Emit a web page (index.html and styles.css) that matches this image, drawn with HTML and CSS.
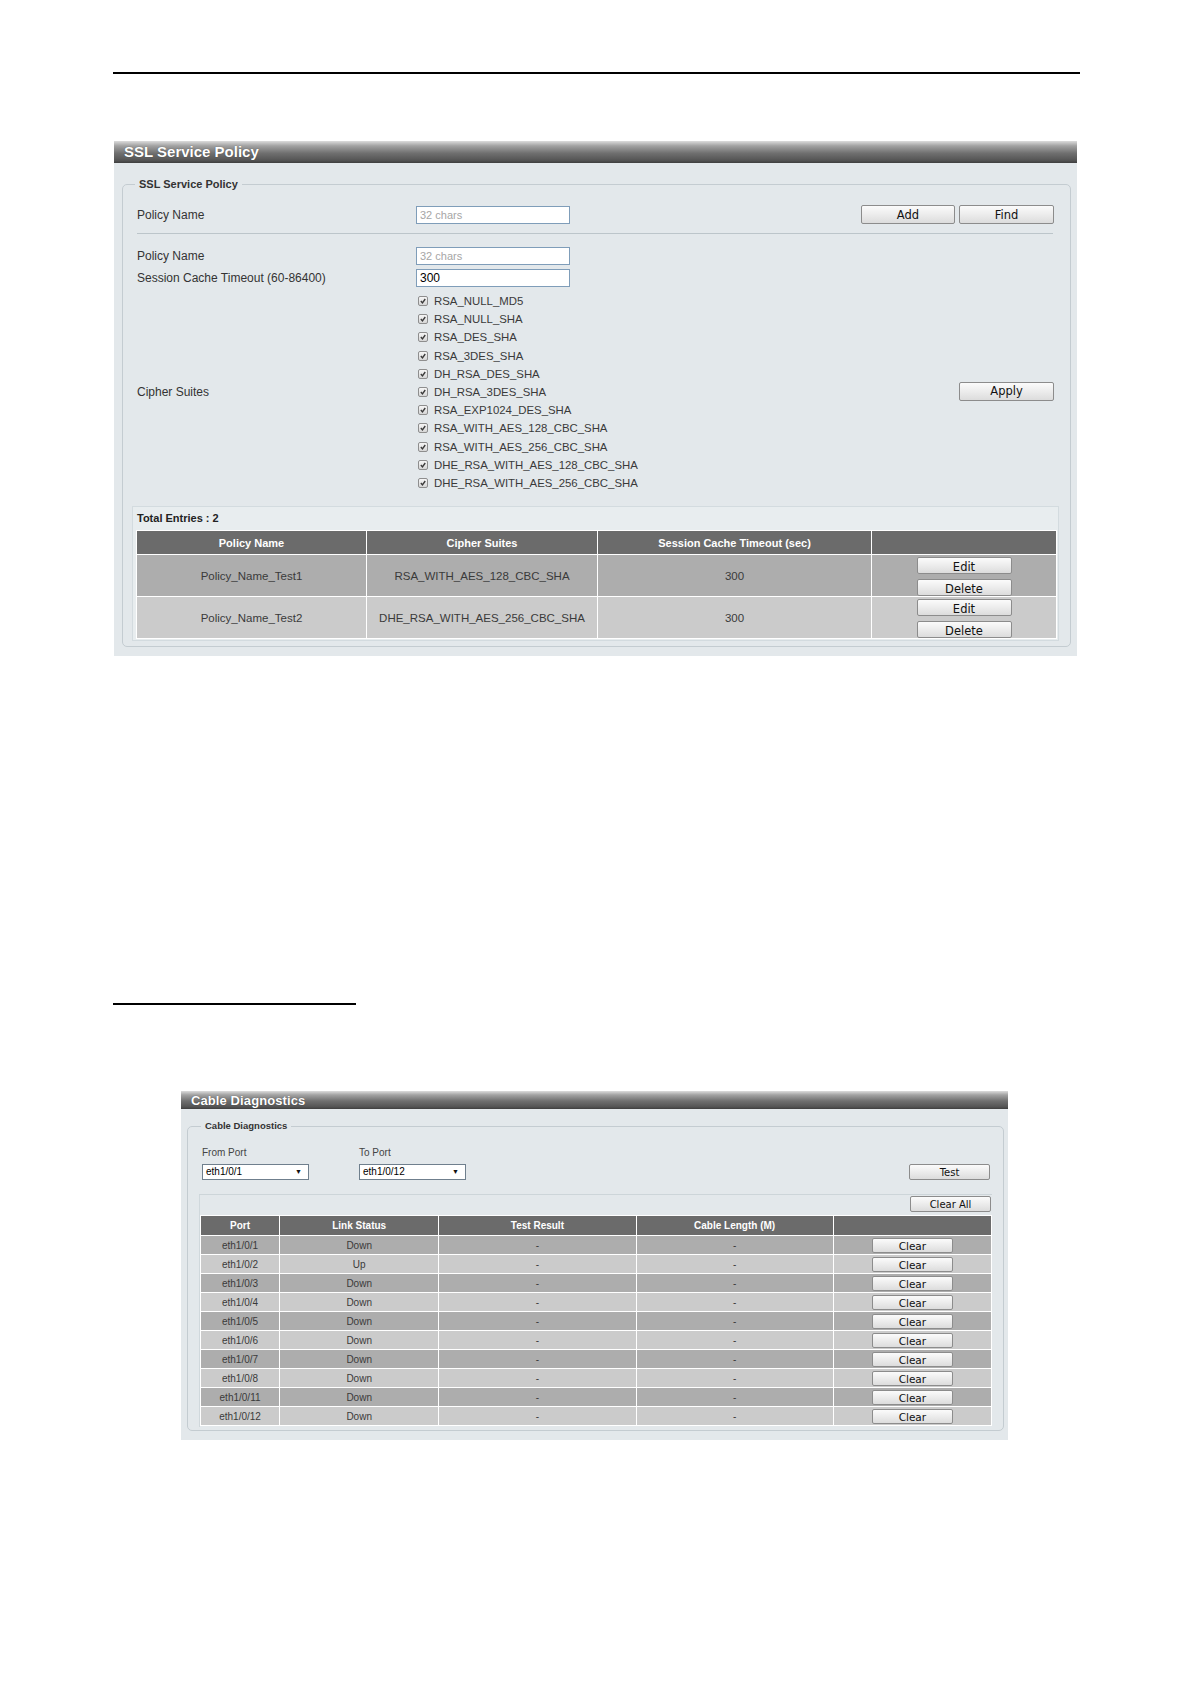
FILE: index.html
```html
<!DOCTYPE html>
<html>
<head>
<meta charset="utf-8">
<title>SSL Service Policy / Cable Diagnostics</title>
<link rel="stylesheet" href="styles.css">
</head>
<body>
<div class="page">
  <div class="rule-top"></div>

  <section class="panel panel-ssl">
    <div class="panel-head">SSL Service Policy</div>
    <div class="panel-body">
      <fieldset class="fs fs-ssl">
        <legend>SSL Service Policy</legend>

        <div class="form-row row-find">
          <span class="lbl">Policy Name</span>
          <input class="inp" type="text" placeholder="32 chars">
          <span class="btns">
            <button class="btn btn-md">Add</button>
            <button class="btn btn-md">Find</button>
          </span>
        </div>

        <div class="sep"></div>

        <div class="form-row row-name">
          <span class="lbl">Policy Name</span>
          <input class="inp" type="text" placeholder="32 chars">
        </div>
        <div class="form-row row-timeout">
          <span class="lbl">Session Cache Timeout (60-86400)</span>
          <input class="inp" type="text" value="300">
        </div>

        <div class="form-row row-cipher">
          <span class="lbl">Cipher Suites</span>
          <div class="cb-list">
            <label class="cb-item"><span class="cb"><svg viewBox="0 0 10 10"><path d="M2.3 5.1 L4.3 7.3 L7.8 2.5"/></svg></span>RSA_NULL_MD5</label>
            <label class="cb-item"><span class="cb"><svg viewBox="0 0 10 10"><path d="M2.3 5.1 L4.3 7.3 L7.8 2.5"/></svg></span>RSA_NULL_SHA</label>
            <label class="cb-item"><span class="cb"><svg viewBox="0 0 10 10"><path d="M2.3 5.1 L4.3 7.3 L7.8 2.5"/></svg></span>RSA_DES_SHA</label>
            <label class="cb-item"><span class="cb"><svg viewBox="0 0 10 10"><path d="M2.3 5.1 L4.3 7.3 L7.8 2.5"/></svg></span>RSA_3DES_SHA</label>
            <label class="cb-item"><span class="cb"><svg viewBox="0 0 10 10"><path d="M2.3 5.1 L4.3 7.3 L7.8 2.5"/></svg></span>DH_RSA_DES_SHA</label>
            <label class="cb-item"><span class="cb"><svg viewBox="0 0 10 10"><path d="M2.3 5.1 L4.3 7.3 L7.8 2.5"/></svg></span>DH_RSA_3DES_SHA</label>
            <label class="cb-item"><span class="cb"><svg viewBox="0 0 10 10"><path d="M2.3 5.1 L4.3 7.3 L7.8 2.5"/></svg></span>RSA_EXP1024_DES_SHA</label>
            <label class="cb-item"><span class="cb"><svg viewBox="0 0 10 10"><path d="M2.3 5.1 L4.3 7.3 L7.8 2.5"/></svg></span>RSA_WITH_AES_128_CBC_SHA</label>
            <label class="cb-item"><span class="cb"><svg viewBox="0 0 10 10"><path d="M2.3 5.1 L4.3 7.3 L7.8 2.5"/></svg></span>RSA_WITH_AES_256_CBC_SHA</label>
            <label class="cb-item"><span class="cb"><svg viewBox="0 0 10 10"><path d="M2.3 5.1 L4.3 7.3 L7.8 2.5"/></svg></span>DHE_RSA_WITH_AES_128_CBC_SHA</label>
            <label class="cb-item"><span class="cb"><svg viewBox="0 0 10 10"><path d="M2.3 5.1 L4.3 7.3 L7.8 2.5"/></svg></span>DHE_RSA_WITH_AES_256_CBC_SHA</label>
          </div>
          <button class="btn btn-md btn-apply">Apply</button>
        </div>

        <div class="entries-box">
          <div class="entries-title">Total Entries : 2</div>
          <table class="grid grid-ssl">
            <colgroup>
              <col class="c-name"><col class="c-cipher"><col class="c-timeout"><col class="c-act">
            </colgroup>
            <tr class="head">
              <th>Policy Name</th><th>Cipher Suites</th><th>Session Cache Timeout (sec)</th><th></th>
            </tr>
            <tr class="odd">
              <td>Policy_Name_Test1</td><td>RSA_WITH_AES_128_CBC_SHA</td><td>300</td>
              <td><div class="act"><button class="btn btn-row">Edit</button><button class="btn btn-row">Delete</button></div></td>
            </tr>
            <tr class="even">
              <td>Policy_Name_Test2</td><td>DHE_RSA_WITH_AES_256_CBC_SHA</td><td>300</td>
              <td><div class="act"><button class="btn btn-row">Edit</button><button class="btn btn-row">Delete</button></div></td>
            </tr>
          </table>
        </div>
      </fieldset>
    </div>
  </section>

  <div class="rule-heading"></div>

  <section class="panel panel-cable">
    <div class="panel-head head-sm">Cable Diagnostics</div>
    <div class="panel-body body-sm">
      <fieldset class="fs fs-cable">
        <legend>Cable Diagnostics</legend>
        <div class="port-row">
          <div class="port-col">
            <span class="lbl-sm">From Port</span>
            <span class="sel">eth1/0/1<span class="arrow">▼</span></span>
          </div>
          <div class="port-col">
            <span class="lbl-sm">To Port</span>
            <span class="sel">eth1/0/12<span class="arrow">▼</span></span>
          </div>
          <button class="btn btn-sm btn-test">Test</button>
        </div>
        <div class="cable-box">
          <div class="clear-all-row"><button class="btn btn-sm">Clear All</button></div>
          <table class="grid grid-cable">
            <colgroup>
              <col class="k-port"><col class="k-link"><col class="k-test"><col class="k-len"><col class="k-act">
            </colgroup>
            <tr class="head"><th>Port</th><th>Link Status</th><th>Test Result</th><th>Cable Length (M)</th><th></th></tr>
            <tr class="odd"><td>eth1/0/1</td><td>Down</td><td>-</td><td>-</td><td><button class="btn btn-clear">Clear</button></td></tr>
            <tr class="even"><td>eth1/0/2</td><td>Up</td><td>-</td><td>-</td><td><button class="btn btn-clear">Clear</button></td></tr>
            <tr class="odd"><td>eth1/0/3</td><td>Down</td><td>-</td><td>-</td><td><button class="btn btn-clear">Clear</button></td></tr>
            <tr class="even"><td>eth1/0/4</td><td>Down</td><td>-</td><td>-</td><td><button class="btn btn-clear">Clear</button></td></tr>
            <tr class="odd"><td>eth1/0/5</td><td>Down</td><td>-</td><td>-</td><td><button class="btn btn-clear">Clear</button></td></tr>
            <tr class="even"><td>eth1/0/6</td><td>Down</td><td>-</td><td>-</td><td><button class="btn btn-clear">Clear</button></td></tr>
            <tr class="odd"><td>eth1/0/7</td><td>Down</td><td>-</td><td>-</td><td><button class="btn btn-clear">Clear</button></td></tr>
            <tr class="even"><td>eth1/0/8</td><td>Down</td><td>-</td><td>-</td><td><button class="btn btn-clear">Clear</button></td></tr>
            <tr class="odd"><td>eth1/0/11</td><td>Down</td><td>-</td><td>-</td><td><button class="btn btn-clear">Clear</button></td></tr>
            <tr class="even"><td>eth1/0/12</td><td>Down</td><td>-</td><td>-</td><td><button class="btn btn-clear">Clear</button></td></tr>
          </table>
        </div>
      </fieldset>
    </div>
  </section>
</div>
</body>
</html>
```

FILE: styles.css
```css
* { box-sizing: border-box; }
html, body { margin: 0; padding: 0; background: #fff; }
body {
  font-family: "Liberation Sans", Arial, sans-serif;
  color: #333;
  width: 1191px;
  height: 1684px;
  overflow: hidden;
}
.page { padding-top: 72px; }

.rule-top {
  margin-left: 113px;
  width: 967px;
  height: 2px;
  background: #000;
}
.rule-heading {
  margin: 347px 0 0 113px;
  width: 243px;
  height: 2px;
  background: #000;
}

/* panels */
.panel { background: #e3e8eb; }
.panel-ssl { margin: 67px 0 0 114px; width: 963px; padding-bottom: 9px; }
.panel-cable { margin: 86px 0 0 181px; width: 827px; padding-bottom: 9px; }

.panel-head {
  height: 22px;
  line-height: 22px;
  padding-left: 10px;
  color: #fff;
  font-weight: bold;
  font-size: 15px;
  text-shadow: 0 0 1px rgba(0,0,0,0.5);
  background: linear-gradient(to bottom, #dcdcdc 0%, #a2a2a2 22%, #707070 55%, #545454 88%, #3e3e3e 100%);
}
.head-sm {
  height: 18px;
  line-height: 19px;
  font-size: 13px;
  letter-spacing: 0.1px;
}
.panel-body { padding-top: 14px; }
.body-sm { padding-top: 11px; }

/* fieldsets */
.fs {
  margin: 0;
  border: 1px solid #c4ccd1;
  border-radius: 5px;
  min-width: 0;
}
.fs legend {
  padding: 0 4px;
  margin-left: 3px;
  font-weight: bold;
  color: #333;
}
.fs-ssl {
  margin: 0 6px 0 8px;
  padding: 0 11px 5px 9px;
}
.fs-ssl legend { font-size: 11px; line-height: 14px; }
.fs-cable {
  margin: 0 4px 0 6px;
  padding: 0 11px 3px 11px;
}
.fs-cable legend { font-size: 9.5px; line-height: 12px; margin-left: 2px; }

/* form rows (SSL) */
.form-row {
  display: grid;
  grid-template-columns: 279px 154px 1fr;
  align-items: center;
  padding: 0 5px;
}
.lbl { font-size: 12px; color: #333; }
.row-find { margin-top: 14px; height: 19px; }
.btns { justify-self: end; display: flex; gap: 4px; }
.sep {
  margin: 9px 6px 0 5px;
  height: 1px;
  background: #bcc5ca;
}
.row-name { margin-top: 13px; }
.row-timeout { margin-top: 4px; }
.row-cipher {
  margin-top: 5px;
  grid-template-columns: 279px 1fr auto;
}

.inp {
  width: 154px;
  height: 18px;
  border: 1px solid #7f9db9;
  background: #fff;
  padding: 0 3px;
  font-family: "Liberation Sans", Arial, sans-serif;
  font-size: 12px;
  color: #000;
  outline: none;
}
.inp::placeholder { color: #a6a6a6; font-size: 11px; }

.cb-list { display: flex; flex-direction: column; }
.cb-item {
  display: flex;
  align-items: center;
  height: 18.2px;
  font-size: 11.4px;
  color: #3a3a3a;
}
.cb {
  width: 10px;
  height: 10px;
  margin-left: 2px;
  margin-right: 6px;
  border: 1px solid #8e8e8e;
  border-radius: 2px;
  background: linear-gradient(#f6f6f6, #d6d6d6);
  display: inline-flex;
}
.cb svg { width: 8px; height: 8px; }
.cb path { fill: none; stroke: #3a3a3a; stroke-width: 1.7; }

/* buttons */
.btn {
  font-family: "DejaVu Sans", Verdana, sans-serif;
  color: #111;
  background: linear-gradient(to bottom, #fbfbfb 0%, #ececec 50%, #dcdcdc 100%);
  border: 1px solid #8c8c8c;
  border-radius: 2px;
  padding: 0;
  margin: 0;
  line-height: 1;
}
.btn-md { width: 94px; height: 19px; font-size: 11.5px; padding-top: 2px; }
.btn-md + .btn-md { width: 95px; }
.btn-apply { width: 95px; justify-self: end; align-self: center; margin-top: -2px; }

/* entries box */
.entries-box {
  margin-top: 14px;
  border: 1px solid #d3dbdf;
  background: #e8edef;
  padding: 0 2px 1px 3px;
}
.entries-title {
  height: 23px;
  line-height: 22px;
  padding-left: 1px;
  font-size: 11px;
  font-weight: bold;
  color: #222;
}

/* tables */
.grid {
  width: 100%;
  border-collapse: collapse;
  table-layout: fixed;
}
.grid th, .grid td {
  border: 1px solid #fff;
  text-align: center;
  padding: 0;
}
.grid .head th { background: #6b6b6b; color: #fff; font-weight: bold; }
.grid .odd td { background: #adadad; }
.grid .even td { background: #cbcbcb; }

.grid-ssl { font-size: 11.5px; }
.grid-ssl .head { height: 24px; }
.grid-ssl .head th { font-size: 11px; }
.grid-ssl .odd, .grid-ssl .even { height: 42px; }
.grid-ssl td { color: #3a3a3a; }
.c-name { width: 230px; }
.c-cipher { width: 231px; }
.c-timeout { width: 274px; }
.c-act { width: 185px; }
.act { display: flex; flex-direction: column; align-items: center; gap: 5px; padding-top: 1px; }
.btn-row {
  width: 95px;
  height: 17px;
  font-size: 11.5px;
  padding-top: 4px;
  overflow: hidden;
}

/* cable section */
.port-row {
  margin-top: 15px;
  display: flex;
  align-items: flex-end;
  padding: 0 2px 0 3px;
}
.port-col { display: flex; flex-direction: column; gap: 5px; width: 157px; }
.lbl-sm { font-size: 10px; line-height: 12px; color: #444; }
.sel {
  position: relative;
  width: 107px;
  height: 16px;
  border: 1px solid #6f7f8d;
  background: #fff;
  font-size: 10px;
  line-height: 14px;
  padding-left: 3px;
  color: #000;
}
.arrow {
  position: absolute;
  right: 6px;
  top: 0;
  font-size: 7px;
  line-height: 14px;
  color: #111;
}
.btn-test { margin-left: auto; }
.btn-sm { width: 81px; height: 16px; font-size: 10px; padding-top: 1px; }

.cable-box {
  margin-top: 14px;
  border-top: 1px solid #cdd5d9;
  border-left: 1px solid #d0d8dc;
  padding-bottom: 1px;
}
.clear-all-row { display: flex; justify-content: flex-end; padding: 1px 1px 0 0; margin-bottom: 3px; }
.grid-cable { font-size: 10px; }
.grid-cable .head { height: 20px; }
.grid-cable .head th { font-size: 10px; }
.grid-cable .odd, .grid-cable .even { height: 19px; }
.grid-cable td { color: #3a3a3a; }
.k-port { width: 79px; }
.k-link { width: 159px; }
.k-test { width: 197px; }
.k-len { width: 197px; }
.k-act { width: 158px; }
.btn-clear { width: 81px; height: 15px; font-size: 10.5px; padding-top: 2px; vertical-align: middle; }
```
